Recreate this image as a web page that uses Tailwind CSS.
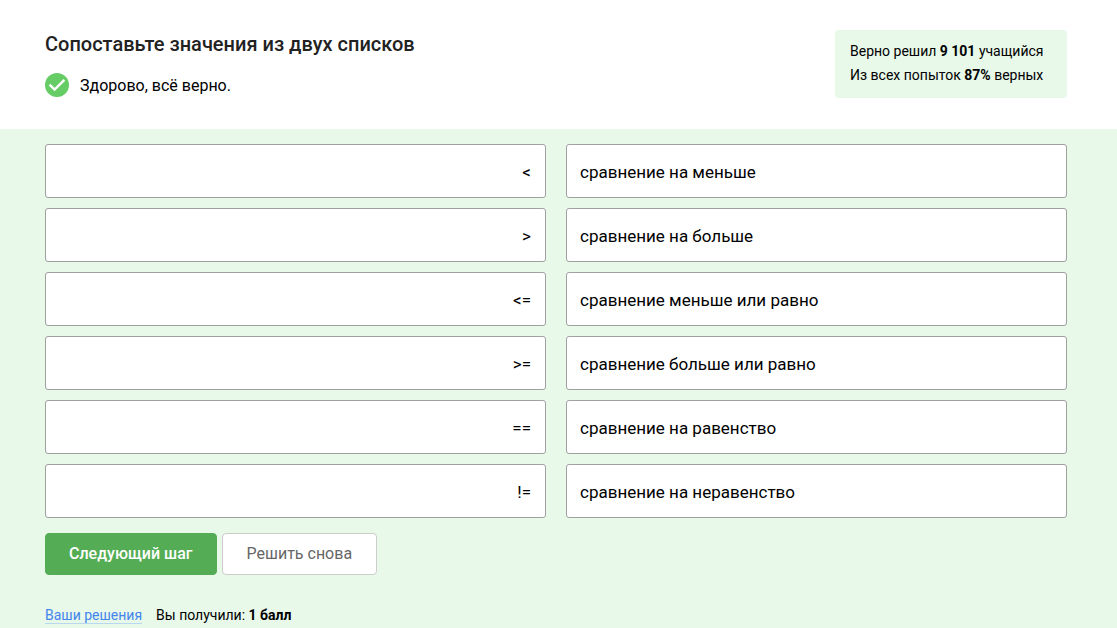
<!DOCTYPE html>
<html lang="ru">
<head>
<meta charset="utf-8">
<meta name="viewport" content="width=device-width, initial-scale=1">
<title>Сопоставьте значения из двух списков</title>
<script src="https://cdn.jsdelivr.net/npm/@tailwindcss/browser@4"></script>
</head>
<body class="flex min-h-screen flex-col bg-white font-[Roboto,sans-serif] text-base text-black">
<header class="flex items-start justify-between gap-6 pt-[30px] pr-[50px] pb-[30px] pl-[45px]">
  <div>
    <h1 class="text-xl leading-7 font-medium text-[#222]">Сопоставьте значения из двух списков</h1>
    <p class="mt-[15px] flex items-start gap-[11px] leading-[26px]">
      <svg class="size-6 shrink-0" viewBox="0 0 24 24" aria-hidden="true">
        <circle cx="12" cy="12" r="12" fill="#66cc66"/>
        <path d="M4.6 11.6 9.6 16.6 19.4 6.8" fill="none" stroke="#fff" stroke-width="2.4"/>
      </svg>
      Здорово, всё верно.
    </p>
  </div>
  <div class="min-w-[232px] shrink-0 rounded bg-[#e8f8e9] px-[15px] pt-[9px] pb-[11px] text-sm leading-6">
    <p>Верно решил <b>9 101</b> учащийся</p>
    <p>Из всех попыток <b>87%</b> верных</p>
  </div>
</header>
<main class="grow bg-[#e8f8e9] pt-[15px] pr-[50px] pl-[45px]">
  <div class="grid grid-cols-2 gap-5 text-[17px] leading-6">
    <ul class="flex flex-col gap-[10px] text-right">
      <li class="rounded-[3px] border border-[#a0a0a0] bg-white px-[14px] pt-[15px] pb-[13px]">&lt;</li>
      <li class="rounded-[3px] border border-[#a0a0a0] bg-white px-[14px] pt-[15px] pb-[13px]">&gt;</li>
      <li class="rounded-[3px] border border-[#a0a0a0] bg-white px-[14px] pt-[15px] pb-[13px]">&lt;=</li>
      <li class="rounded-[3px] border border-[#a0a0a0] bg-white px-[14px] pt-[15px] pb-[13px]">&gt;=</li>
      <li class="rounded-[3px] border border-[#a0a0a0] bg-white px-[14px] pt-[15px] pb-[13px]">==</li>
      <li class="rounded-[3px] border border-[#a0a0a0] bg-white px-[14px] pt-[15px] pb-[13px]">!=</li>
    </ul>
    <ul class="flex flex-col gap-[10px]">
      <li class="rounded-[3px] border border-[#a0a0a0] bg-white px-[13px] pt-[15px] pb-[13px]">сравнение на меньше</li>
      <li class="rounded-[3px] border border-[#a0a0a0] bg-white px-[13px] pt-[15px] pb-[13px]">сравнение на больше</li>
      <li class="rounded-[3px] border border-[#a0a0a0] bg-white px-[13px] pt-[15px] pb-[13px]">сравнение меньше или равно</li>
      <li class="rounded-[3px] border border-[#a0a0a0] bg-white px-[13px] pt-[15px] pb-[13px]">сравнение больше или равно</li>
      <li class="rounded-[3px] border border-[#a0a0a0] bg-white px-[13px] pt-[15px] pb-[13px]">сравнение на равенство</li>
      <li class="rounded-[3px] border border-[#a0a0a0] bg-white px-[13px] pt-[15px] pb-[13px]">сравнение на неравенство</li>
    </ul>
  </div>
  <div class="mt-[15px] flex gap-[5px] leading-6">
    <button type="button" class="rounded border border-[#54ad54] bg-[#54ad54] px-[23px] py-2 font-medium text-white">Следующий шаг</button>
    <button type="button" class="rounded border border-[#ccc] bg-white px-6 py-2 text-[#666]">Решить снова</button>
  </div>
  <div class="mt-8 flex gap-[14px] text-sm leading-4">
    <a href="#" class="border-b border-[#b8d8f0] text-[#4485ed]">Ваши решения</a>
    <p>Вы получили: <b>1 балл</b></p>
  </div>
</main>
</body>
</html>
